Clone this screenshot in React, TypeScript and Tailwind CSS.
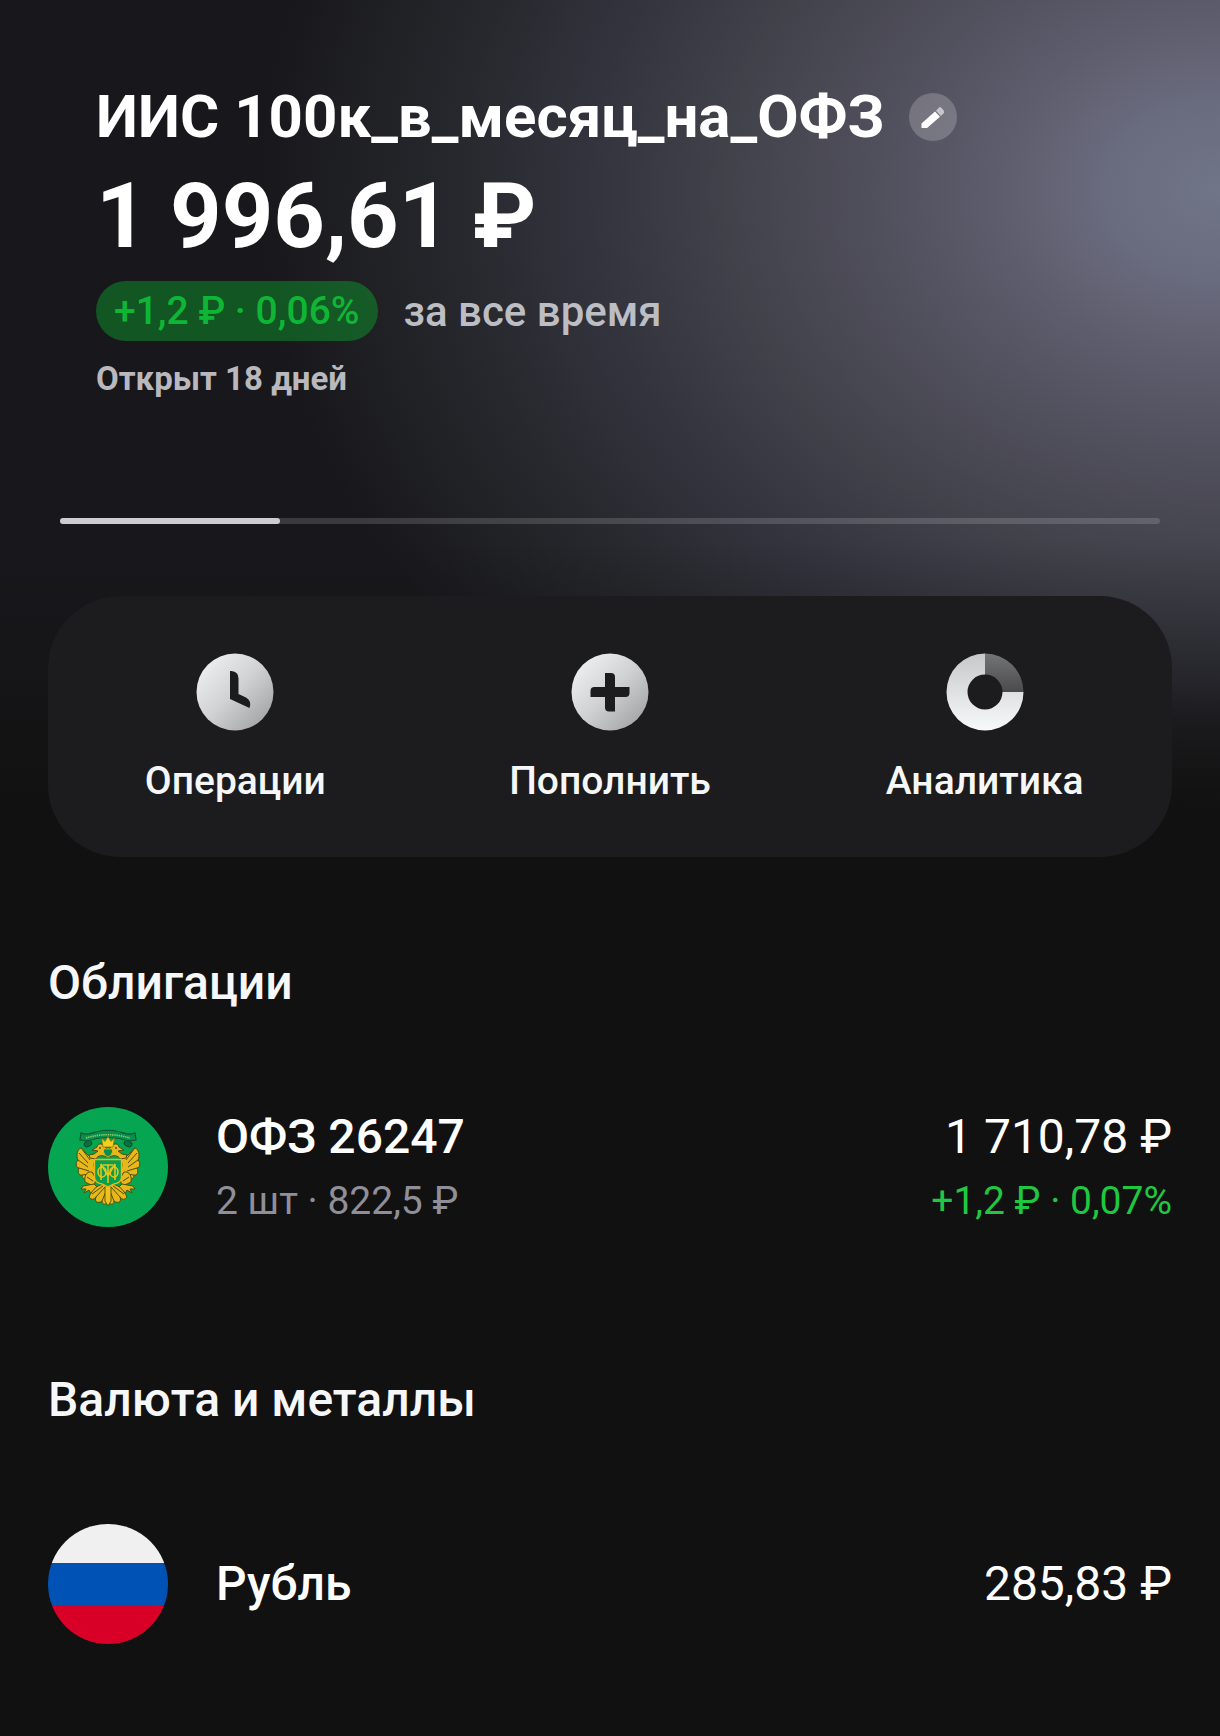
import type { ReactNode } from 'react';

function PencilIcon() {
  return (
    <svg viewBox="0 0 48 48" className="size-12" aria-hidden="true">
      <path d="M12.5 35 V30.5 L26 18.5 L31 23.8 L18 35 Z" fill="#fff" />
      <path d="M27 17.7 L30 14.6 Q31 13.6 32 14.6 L34.6 17.2 Q35.2 18 35 20 L31.8 23 Z" fill="#c6c6cb" />
    </svg>
  );
}

function ClockIcon() {
  return (
    <svg viewBox="0 0 78 78" className="size-[78px]" aria-hidden="true">
      <defs>
        <linearGradient id="clock" x1="0.1" y1="0.1" x2="0.9" y2="0.9">
          <stop offset="0" stopColor="#eeeff0" />
          <stop offset="0.5" stopColor="#cfd1d2" />
          <stop offset="1" stopColor="#a3a4a5" />
        </linearGradient>
      </defs>
      <circle cx="39" cy="39" r="38.5" fill="url(#clock)" />
      <path d="M34 18 H35.5 Q42.5 18.5 42.5 25.5 V41 L50 44.5 Q56 48 53.5 55 L34 46 Z" fill="#1c1c1e" />
    </svg>
  );
}

function PlusIcon() {
  return (
    <svg viewBox="0 0 78 78" className="size-[78px]" aria-hidden="true">
      <defs>
        <linearGradient id="plus" x1="0.1" y1="0.1" x2="0.9" y2="0.9">
          <stop offset="0" stopColor="#eeeff0" />
          <stop offset="0.5" stopColor="#cfd1d2" />
          <stop offset="1" stopColor="#a3a4a5" />
        </linearGradient>
      </defs>
      <circle cx="39" cy="39" r="38.5" fill="url(#plus)" />
      <path
        d="M34 20 H40 Q44 20 44 24 V34 H58.5 V40 Q58.5 44 54.5 44 H44 V58.5 H38 Q34 58.5 34 54.5 V44 H19.5 V38 Q19.5 34 23.5 34 H34 Z"
        fill="#1c1c1e"
      />
    </svg>
  );
}

function DonutIcon() {
  return (
    <svg viewBox="0 0 78 78" className="size-[78px]" aria-hidden="true">
      <defs>
        <linearGradient id="ring" x1="0" y1="0" x2="0" y2="1">
          <stop offset="0" stopColor="#c6c8ca" />
          <stop offset="1" stopColor="#f8f9fb" />
        </linearGradient>
        <linearGradient id="slice" x1="0" y1="0" x2="0" y2="1">
          <stop offset="0" stopColor="#747577" />
          <stop offset="1" stopColor="#4a4a4c" />
        </linearGradient>
      </defs>
      <path d="M39 0.5 A38.5 38.5 0 1 0 77.5 39 H56.5 A17.5 17.5 0 1 1 39 21.5 Z" fill="url(#ring)" />
      <path d="M39 0.5 A38.5 38.5 0 0 1 77.5 39 H56.5 A17.5 17.5 0 0 0 39 21.5 Z" fill="url(#slice)" />
    </svg>
  );
}

function EagleWing() {
  return (
    <g stroke="#4f4e0c" strokeWidth="1" strokeLinejoin="round" fill="#e8b71a">
      <path d="M48 51 L46 57 L47 66 L41 70 C38 74 34 72 34 68 C31 69 29 65 31 61 C28 61 27 56 30 53 C28 49 29 42 33 41 C37 43 38 50 48 51 Z" />
      <path d="M31 46 L40 56 M30 53 L40 60 M31 61 L41 64 M34 68 L42 67 M34 42 L42 53" fill="none" />
      <path d="M44 65 C38 64 36 70 37 75 L41 77 L46 79 L48 72 Z M39 70 L45 74" />
      <path d="M46 77 L35 79 L33 82 L38 82 L36 86 L41 83 L43 87 L49 80 Z" />
      <path d="M48 52 C50 48 55 48 58 50 L59 43 C56 36 50 35 49 40 L44 43 L50 44 L46 47 L41 48 L42 51 Z" />
      <circle cx="52" cy="41" r="0.6" fill="#4f4e0c" />
      <path d="M60 78 C51 75 44 83 41 90 C43 93 46 93 48 90 C46 95 50 97 54 94 C54 98 58 98 60 95 Z" />
      <path d="M57 80 L47 91 M59 82 L54 94 M55 79 L44 87" fill="none" />
    </g>
  );
}

function CoatOfArms() {
  return (
    <svg viewBox="0 0 120 120" className="size-[120px] shrink-0" aria-hidden="true">
      <circle cx="60" cy="60" r="60" fill="#05a551" />
      <path
        d="M33 26 C38 29 43 26 50 24.5 Q60 22 70 24.5 C77 26 82 29 87 26 L88 33 L81 34 Q60 27 39 34 L32 33 Z"
        fill="#0a8f4b"
        stroke="#0a5332"
        strokeWidth="1.2"
      />
      <path d="M38 31 Q60 24.5 82 31" fill="none" stroke="#8cc86c" strokeWidth="1.6" strokeDasharray="1.4 0.8" />
      <path d="M39 34 Q33 38 39 40 Q46 38 43 34 M81 34 Q87 38 81 40 Q74 38 77 34" fill="#08703f" stroke="#0a5332" strokeWidth="1.2" />
      <EagleWing />
      <g transform="translate(120 0) scale(-1 1)">
        <EagleWing />
      </g>
      <path d="M57 80 L60 77 L63 80 L63 94 L60 99 L57 94 Z" fill="#f0c21f" stroke="#4f4e0c" strokeWidth="0.9" />
      <path d="M55 40 L53.5 31 L57 34.5 L60 29.5 L63 34.5 L66.5 31 L65 40 Z" fill="#f8ce1c" stroke="#7a6d10" strokeWidth="0.7" />
      <path d="M55.5 42 H64.5 V45 Q63.5 49 60 50 Q56.5 49 55.5 45 Z" fill="#0a8f4b" stroke="#e0b41d" strokeWidth="0.9" />
      <path d="M46.5 52.5 H73.5 V70 Q73.5 76 66 77 L60 80 L54 77 Q46.5 76 46.5 70 Z" fill="#07a04f" stroke="#e8b71a" strokeWidth="1.4" />
      <g fill="none" stroke="#eac41c" strokeWidth="1.6">
        <path d="M53 57 V73 M67 57 V73 M60 58 V76 M53 57 L60 69 L67 57 M55 58 H65" />
        <ellipse cx="54" cy="65" rx="4" ry="5" />
        <ellipse cx="66" cy="65" rx="4" ry="5" />
      </g>
    </svg>
  );
}

function RussianFlag() {
  return (
    <div className="flex size-[120px] shrink-0 flex-col overflow-hidden rounded-full" aria-hidden="true">
      <div className="h-[39px] bg-[#f0f0f0]" />
      <div className="h-[42px] bg-[#0052b4]" />
      <div className="h-[39px] bg-[#d80027]" />
    </div>
  );
}

function Action({ icon, label }: { icon: ReactNode; label: string }) {
  return (
    <button type="button" className="flex flex-1 flex-col items-center gap-[26px] text-[39px] leading-[48px] font-medium text-[#f6f7f8]">
      {icon}
      {label}
    </button>
  );
}

export default function App() {
  return (
    <div className="min-h-screen bg-[#111111] bg-[linear-gradient(to_bottom,#11111100_540px,#11111133_620px,#11111166_680px,#111111b3_730px,#111111_810px),radial-gradient(960px_740px_at_100%_190px,#717588_0%,#696b7e_12%,#5e5d6d_23%,#504f5c_36%,#42424b_51%,#33333d_66%,#26272c_81%,#18181c_100%)] font-[Roboto,sans-serif] text-white">
      <header className="px-24 pt-[81px]">
        <div className="flex items-center gap-6">
          <h1 className="text-[60px] leading-[72px] font-bold">ИИС 100к_в_месяц_на_ОФЗ</h1>
          <button type="button" aria-label="Изменить название" className="rounded-full bg-white/20">
            <PencilIcon />
          </button>
        </div>
        <p className="mt-3 text-[90px] leading-[104px] font-bold">1 996,61 ₽</p>
        <div className="mt-3 flex items-start gap-[26px]">
          <span className="rounded-full bg-[#0ca32c]/45 px-[18px] text-[39px] leading-[60px] font-medium text-[#0fb636]">+1,2 ₽ · 0,06%</span>
          <span className="text-[42px] leading-[62px] font-medium text-[#bdbdc4]">за все время</span>
        </div>
        <p className="mt-3.5 text-[33px] leading-[44px] font-bold text-[#b9b9bd]">Открыт 18 дней</p>
      </header>

      <div role="progressbar" aria-label="Прогресс" aria-valuenow={20} className="mx-[60px] mt-[117px] h-1.5 rounded-full bg-white/15">
        <div className="h-full w-1/5 rounded-full bg-[#cdcdcf]" />
      </div>

      <nav className="mx-12 mt-[72px] flex rounded-[72px] bg-[#1c1c1e] pt-[57px] pb-[52px]">
        <Action icon={<ClockIcon />} label="Операции" />
        <Action icon={<PlusIcon />} label="Пополнить" />
        <Action icon={<DonutIcon />} label="Аналитика" />
      </nav>

      <main className="px-12 pb-[92px]">
        <section>
          <h2 className="pt-24 text-[48px] leading-[60px] font-medium text-[#f6f7f8]">Облигации</h2>
          <div className="mt-[94px] flex items-center gap-12">
            <CoatOfArms />
            <div className="flex-1">
              <p className="text-[48px] leading-[60px] font-medium">ОФЗ 26247</p>
              <p className="mt-2 text-[39px] leading-[52px] text-[#8f8f99]">2 шт · 822,5 ₽</p>
            </div>
            <div className="text-right">
              <p className="text-[48px] leading-[60px]">1 710,78 ₽</p>
              <p className="mt-2 text-[39px] leading-[52px] text-[#1fc840]">+1,2 ₽ · 0,07%</p>
            </div>
          </div>
        </section>
        <section>
          <h2 className="mt-[143px] text-[48px] leading-[60px] font-medium text-[#f6f7f8]">Валюта и металлы</h2>
          <div className="mt-[94px] flex items-center gap-12">
            <RussianFlag />
            <p className="flex-1 text-[48px] leading-[60px] font-medium">Рубль</p>
            <p className="text-[48px] leading-[60px]">285,83 ₽</p>
          </div>
        </section>
      </main>
    </div>
  );
}
